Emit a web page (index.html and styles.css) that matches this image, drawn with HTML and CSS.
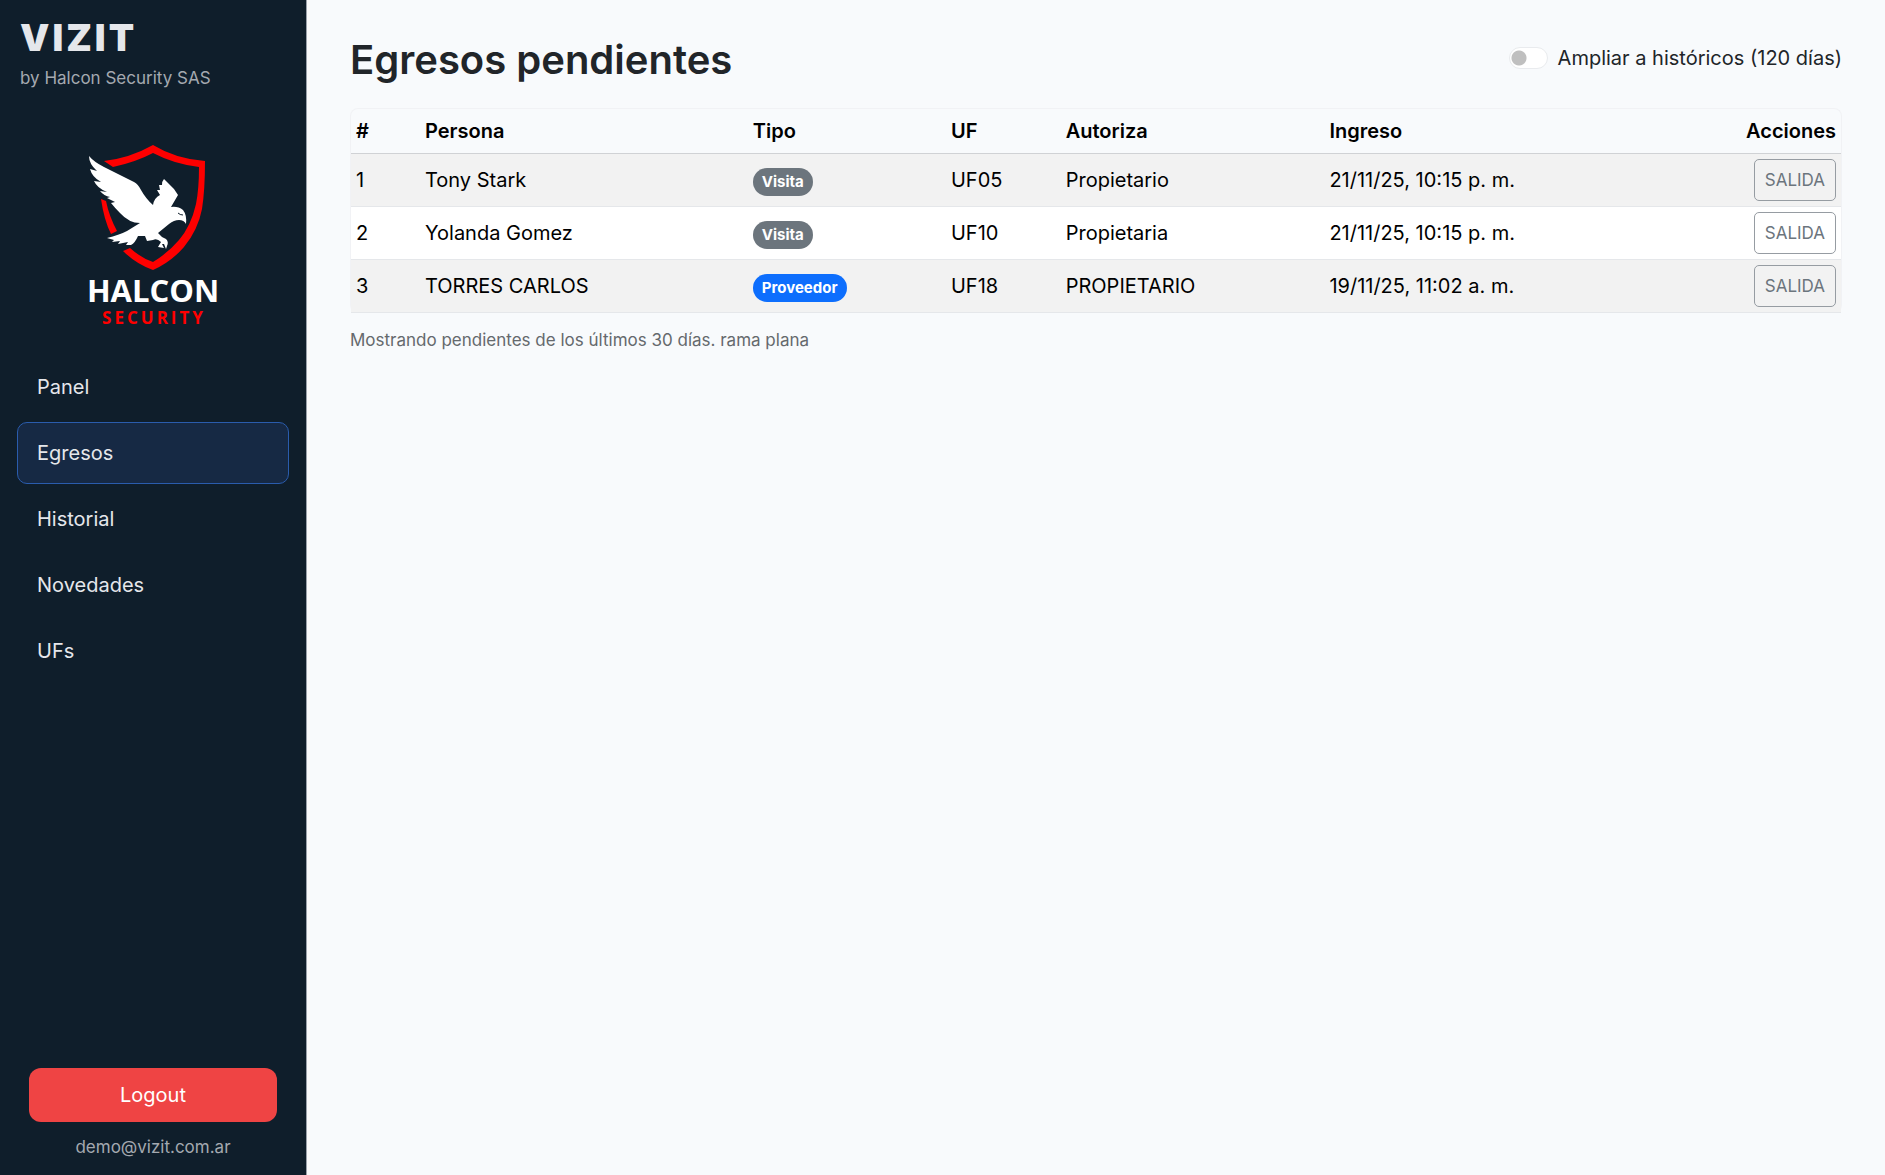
FILE: index.html
```
<!DOCTYPE html>
<html lang="es">
<head>
  <meta charset="UTF-8">
  <meta name="viewport" content="width=device-width, initial-scale=1.0">
  <title>Egresos pendientes</title>
  <link rel="stylesheet" href="styles.css">
</head>
<body>
  <aside class="sidebar">
    <div class="brand">
      <div class="brand-name">VIZIT</div>
      <div class="brand-by">by Halcon Security SAS</div>
    </div>

    <svg class="logo" viewBox="0 0 160 205" role="img" aria-label="Halcon Security">
      <!-- escudo -->
      <path class="shield" d="M34 31 Q60 28 83 15 Q106 29 135 31 Q135 60 132 79 Q128 100 114 117 Q101 132 83 140 Q66 134 53 121 L60 118 Q71 128 83 132 Q98 123 109 110 Q121 96 126 74 Q129 59 129 37 Q104 34 83 23 Q66 32 43 37Z"/>
      <path class="shield" d="M31 69 L36 71 Q39 86 47 101 L41 104 Q34 90 31 69Z"/>
      <!-- halcon -->
      <path class="falcon" d="M19 26 Q24 32 34 37 L64 52 Q68 54 71 60 Q76 69 83 75 Q84 68 90 65 L87 60 L90 60 L89 55 L92 55 Q92 51 94 49 L98 53 Q104 58 108 65 L101 77 Q108 76 113 80 Q117 85 116 94 Q114 90 109 90 Q104 90 99 94 L88 103 Q91 107 96 109 Q99 112 97 116 L96 119 L94 114 L92 114 L94 118 L88 117 L91 112 Q87 108 83 110 L77 111 L75 106 L68 106 Q65 113 61 115 L56 115 L58 112 L48 114 L50 111 L42 112 L44 110 L37 108 Q49 105 57 101 L70 93 Q59 93 50 83 Q45 78 41 73 L45 72 L37 68 L40 67 Q34 66 30 61 L37 62 Q27 58 24 51 L31 52 Q22 47 20 39 L27 41 Q19 34 19 26Z"/>
      <path class="eye" d="M108 83 Q110 85 113 85"/>
      <text class="logo-name" x="83" y="172">HALCON</text>
      <text class="logo-sub" x="84" y="194">SECURITY</text>
    </svg>

    <nav class="menu">
      <a href="#panel">Panel</a>
      <a href="#egresos" class="active">Egresos</a>
      <a href="#historial">Historial</a>
      <a href="#novedades">Novedades</a>
      <a href="#ufs">UFs</a>
    </nav>

    <div class="sidebar-footer">
      <button type="button" class="logout">Logout</button>
      <div class="user">demo@vizit.com.ar</div>
    </div>
  </aside>

  <main class="content">
    <header class="page-header">
      <h1>Egresos pendientes</h1>
      <div class="switch">
        <input type="checkbox" id="historicos">
        <label for="historicos">Ampliar a históricos (120 días)</label>
      </div>
    </header>

    <table class="egresos">
      <thead>
        <tr>
          <th class="col-num">#</th>
          <th class="col-persona">Persona</th>
          <th class="col-tipo">Tipo</th>
          <th class="col-uf">UF</th>
          <th class="col-autoriza">Autoriza</th>
          <th>Ingreso</th>
          <th class="acciones">Acciones</th>
        </tr>
      </thead>
      <tbody>
        <tr>
          <td>1</td>
          <td>Tony Stark</td>
          <td><span class="badge">Visita</span></td>
          <td>UF05</td>
          <td>Propietario</td>
          <td>21/11/25, 10:15 p. m.</td>
          <td class="acciones"><button type="button" class="salida">SALIDA</button></td>
        </tr>
        <tr>
          <td>2</td>
          <td>Yolanda Gomez</td>
          <td><span class="badge">Visita</span></td>
          <td>UF10</td>
          <td>Propietaria</td>
          <td>21/11/25, 10:15 p. m.</td>
          <td class="acciones"><button type="button" class="salida">SALIDA</button></td>
        </tr>
        <tr>
          <td>3</td>
          <td>TORRES CARLOS</td>
          <td><span class="badge badge-proveedor">Proveedor</span></td>
          <td>UF18</td>
          <td>PROPIETARIO</td>
          <td>19/11/25, 11:02 a. m.</td>
          <td class="acciones"><button type="button" class="salida">SALIDA</button></td>
        </tr>
      </tbody>
    </table>
    <p class="nota">Mostrando pendientes de los últimos 30 días. rama plana</p>
  </main>
</body>
</html>
```
FILE: styles.css
```
* {
  box-sizing: border-box;
}
body {
  margin: 0;
  display: flex;
  min-height: 100vh;
  font-family: Inter, sans-serif;
  font-size: 20px;
  line-height: 32px;
  color: #212529;
  background-color: #f8fafc;
}
button {
  font-family: inherit;
  cursor: pointer;
}

/* Sidebar */
.sidebar {
  width: 307px;
  flex-shrink: 0;
  display: flex;
  flex-direction: column;
  background-color: #0f1e2b;
  border-right: 1px solid #9aa1aa;
  color: #e5e7eb;
}
.brand {
  padding: 16px 20px 0;
}
.brand-name {
  font-size: 37px;
  font-weight: 900;
  line-height: 44px;
  letter-spacing: 3px;
}
.brand-by {
  margin-top: 4px;
  font-size: 17px;
  line-height: 29px;
  color: #a4a9b0;
}
.logo {
  width: 160px;
  height: 205px;
  margin: 37px auto 21px 70px;
}
.shield {
  fill: #fe0000;
}
.falcon {
  fill: #fff;
}
.eye {
  fill: none;
  stroke: #0f1e2b;
  stroke-width: 1px;
}
.logo-name {
  font-family: "Open Sans", sans-serif;
  font-size: 31px;
  font-weight: 700;
  fill: #fff;
  text-anchor: middle;
}
.logo-sub {
  font-family: "Open Sans", sans-serif;
  font-size: 17px;
  font-weight: 700;
  letter-spacing: 3px;
  fill: #fe0000;
  text-anchor: middle;
}
.menu {
  display: flex;
  flex-direction: column;
  gap: 4px;
  padding: 0 17px;
}
.menu a {
  padding: 14px 19px;
  border: 1px solid transparent;
  border-radius: 10px;
  color: #e5e7eb;
  text-decoration: none;
}
.menu a.active {
  background-color: #162944;
  border-color: #2a5cad;
}
.sidebar-footer {
  margin-top: auto;
  padding: 0 29px 12px;
  text-align: center;
}
.logout {
  width: 100%;
  padding: 11px;
  border: none;
  border-radius: 12px;
  background-color: #ef4444;
  color: #fff;
  font-size: 20px;
  line-height: 32px;
}
.user {
  margin-top: 9px;
  font-size: 17px;
  color: #a4a9b0;
}

/* Contenido */
.content {
  flex: 1;
  padding: 32px 43px;
}
.page-header {
  display: flex;
  justify-content: space-between;
  align-items: center;
  margin-bottom: 20px;
}
.page-header h1 {
  margin: 0;
  font-size: 40px;
  font-weight: 600;
  line-height: 56px;
}
.switch {
  display: flex;
  align-items: center;
  gap: 10px;
  padding-bottom: 4px;
}
.switch input {
  appearance: none;
  width: 39px;
  height: 22px;
  margin: 0;
  border: 1px solid #e9ebee;
  border-radius: 11px;
  background: radial-gradient(circle at 9px 10px, #bfbfbf 7px, #fff 8px);
}
.egresos {
  width: 100%;
  table-layout: fixed;
  border-collapse: separate;
  border-spacing: 0;
  border: 1px solid #f1f2f5;
  border-bottom: none;
  border-radius: 8px;
  color: #000;
}
.egresos th,
.egresos td {
  padding: 5px;
  text-align: left;
  border-bottom: 1px solid #e5e7ea;
}
.egresos th {
  padding: 6px 5px;
  font-weight: 600;
  border-bottom-color: #d0d2d5;
}
.egresos .acciones {
  text-align: right;
}
.egresos tbody tr {
  background-color: #fff;
}
.egresos tbody tr:nth-child(odd) {
  background-color: #f2f2f2;
}
.egresos .col-num {
  width: 69px;
}
.col-persona {
  width: 22%;
}
.col-tipo {
  width: 13.3%;
}
.col-uf {
  width: 7.7%;
}
.col-autoriza {
  width: 17.7%;
}
.badge {
  display: inline-block;
  padding: 0 9px;
  border-radius: 14px;
  background-color: #6c757d;
  color: #fff;
  font-size: 15px;
  font-weight: 700;
  line-height: 28px;
}
.badge-proveedor {
  background-color: #0d6efd;
}
.salida {
  display: block;
  margin-left: auto;
  padding: 4px 10px;
  border: 1px solid #969ca2;
  border-radius: 5px;
  background-color: transparent;
  color: #6c757d;
  font-size: 17px;
  line-height: 32px;
}
.nota {
  margin: 11px 0 0;
  font-size: 17px;
  color: #65696d;
}
```
